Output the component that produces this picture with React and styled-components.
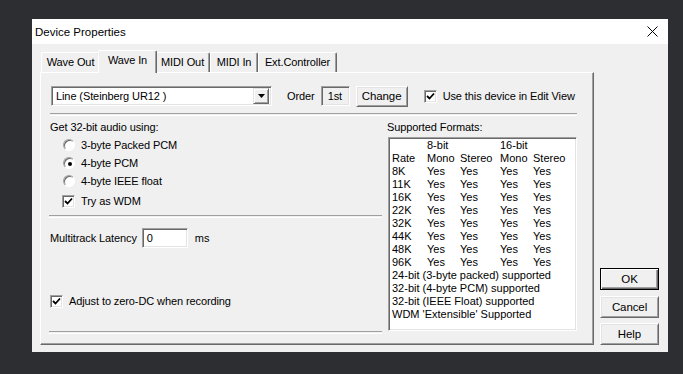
import React from 'react';
import styled, { createGlobalStyle } from 'styled-components';

const GlobalStyle = createGlobalStyle`
  html, body {
    margin: 0;
    padding: 0;
    background: #2d2e31;
  }
  body {
    font-family: "Liberation Sans", Arial, sans-serif;
    font-size: 11px;
    letter-spacing: -0.1px;
    color: #000;
  }
`;

const Desktop = styled.div`
  min-height: 374px;
  padding: 19px 0 0 32px;
  box-sizing: border-box;
  background: #2d2e31;
`;

const Window = styled.div`
  width: 636px;
  height: 333px;
  background: #f0f0f0;
  display: flex;
  flex-direction: column;
`;

const TitleBar = styled.div`
  height: 25px;
  background: #fff;
  display: flex;
  align-items: center;
  justify-content: space-between;
  padding: 0 10px 0 3px;
  font-size: 11.5px;
  letter-spacing: 0;
`;

const CloseIcon = styled.svg`
  width: 11px;
  height: 11px;
  display: block;
`;

const Body = styled.div`
  flex: 1;
  display: flex;
  padding: 6px 8px 7px 8px;
  gap: 6px;
`;

const TabArea = styled.div`
  width: 554px;
  display: flex;
  flex-direction: column;
`;

const TabStrip = styled.div`
  height: 22px;
  display: flex;
  align-items: flex-end;
  padding-left: 1px;
`;

const Tab = styled.div`
  position: relative;
  box-sizing: border-box;
  width: ${p => p.$w + (p.$active ? 4 : 0)}px;
  height: ${p => (p.$active ? '23px' : '20px')};
  margin: ${p => (p.$active ? '0 -2px -1px -2px' : '0')};
  padding-top: 3px;
  text-align: center;
  z-index: ${p => (p.$active ? 1 : 0)};
  background: #f0f0f0;
  border-top: 1px solid #fff;
  border-left: 1px solid #fff;
  border-right: 1px solid #696969;
  border-radius: 2px 2px 0 0;
  box-shadow: inset -1px 0 #a0a0a0;
  white-space: nowrap;
  line-height: 13px;
`;

const Panel = styled.div`
  flex: 1;
  box-sizing: border-box;
  border-top: 1px solid #fff;
  border-left: 1px solid #fff;
  border-right: 1px solid #696969;
  border-bottom: 1px solid #696969;
  box-shadow: inset -1px -1px #a0a0a0;
  padding: 13px 16px 0 10px;
  display: flex;
  flex-direction: column;
`;

const TopRow = styled.div`
  height: 20px;
  display: flex;
  align-items: center;
`;

const Sunken = styled.div`
  box-sizing: border-box;
  height: ${p => p.$h || 20}px;
  width: ${p => p.$w}px;
  background: ${p => (p.$readOnly ? '#f0f0f0' : '#fff')};
  border-top: 1px solid #a0a0a0;
  border-left: 1px solid #a0a0a0;
  border-right: 1px solid #fff;
  border-bottom: 1px solid #fff;
  box-shadow: inset 1px 1px #696969, inset -1px -1px #e3e3e3;
  display: flex;
  align-items: center;
  padding-left: ${p => p.$pad || 3}px;
  white-space: nowrap;
`;

const Select = styled(Sunken)`
  width: 221px;
  padding: 2px;
  justify-content: space-between;
`;

const SelectText = styled.span`
  padding-left: 2px;
`;

const ArrowButton = styled.div`
  width: 16px;
  height: 16px;
  box-sizing: border-box;
  background: #f0f0f0;
  border-top: 1px solid #e3e3e3;
  border-left: 1px solid #e3e3e3;
  border-right: 1px solid #696969;
  border-bottom: 1px solid #696969;
  box-shadow: inset 1px 1px #fff, inset -1px -1px #a0a0a0;
  display: flex;
  align-items: center;
  justify-content: center;
`;

const Label = styled.span`
  margin-left: ${p => p.$ml || 0}px;
  margin-right: ${p => p.$mr || 0}px;
  white-space: nowrap;
`;

const Button = styled.div`
  box-sizing: border-box;
  width: ${p => p.$w || 59}px;
  height: ${p => p.$h || 22}px;
  background: #f0f0f0;
  border-top: 1px solid ${p => (p.$default ? '#000' : '#fff')};
  border-left: 1px solid ${p => (p.$default ? '#000' : '#fff')};
  border-right: 1px solid ${p => (p.$default ? '#000' : '#696969')};
  border-bottom: 1px solid ${p => (p.$default ? '#000' : '#696969')};
  box-shadow: ${p =>
    p.$default
      ? 'inset 1px 1px #fff, inset -1px -1px #696969, inset -2px -2px #a0a0a0'
      : 'inset 1px 1px #e3e3e3, inset -1px -1px #a0a0a0'};
  display: flex;
  align-items: center;
  justify-content: center;
  margin-left: ${p => p.$ml || 0}px;
  margin-top: ${p => p.$mt || 0}px;
  font-size: 11.5px;
`;

const CheckRow = styled.div`
  height: 18px;
  display: flex;
  align-items: center;
  gap: 6px;
  margin-left: ${p => p.$ml || 0}px;
  margin-top: ${p => p.$mt || 0}px;
  white-space: nowrap;
`;

const CheckBox = styled.div`
  box-sizing: border-box;
  width: 13px;
  height: 13px;
  background: #fff;
  border-top: 1px solid #a0a0a0;
  border-left: 1px solid #a0a0a0;
  border-right: 1px solid #fff;
  border-bottom: 1px solid #fff;
  box-shadow: inset 1px 1px #696969, inset -1px -1px #e3e3e3;
  display: flex;
  align-items: center;
  justify-content: center;
  flex-shrink: 0;
`;

const Radio = styled.div`
  box-sizing: border-box;
  width: 12px;
  height: 12px;
  border-radius: 50%;
  background: #fff;
  border: 1px solid;
  border-color: #a0a0a0 #fff #fff #a0a0a0;
  box-shadow: inset 1px 1px #696969;
  display: flex;
  align-items: center;
  justify-content: center;
  flex-shrink: 0;
  &::after {
    content: '';
    display: ${p => (p.$on ? 'block' : 'none')};
    width: 4px;
    height: 4px;
    border-radius: 50%;
    background: #000;
    margin: 1px 0 0 1px;
  }
`;

const Separator = styled.div`
  height: 1px;
  border-top: 1px solid #a0a0a0;
  border-bottom: 1px solid #fff;
  margin-top: ${p => p.$mt || 0}px;
  margin-left: -1px;
`;

const Columns = styled.div`
  display: flex;
  gap: 5px;
`;

const LeftColumn = styled.div`
  width: 332px;
  display: flex;
  flex-direction: column;
  margin-left: -1px;
`;

const RightColumn = styled.div`
  flex: 1;
  display: flex;
  flex-direction: column;
`;

const Heading = styled.div`
  line-height: 14px;
  margin-top: 4px;
  white-space: nowrap;
`;

const RadioGroup = styled.div`
  display: flex;
  flex-direction: column;
  margin-top: 2px;
  padding-left: 13px;
`;

const FieldRow = styled.div`
  height: 20px;
  display: flex;
  align-items: center;
  margin-top: ${p => p.$mt || 0}px;
`;

const ListBox = styled.div`
  box-sizing: border-box;
  height: 194px;
  width: 189px;
  margin-top: 3px;
  margin-left: 1px;
  background: #fff;
  border-top: 1px solid #a0a0a0;
  border-left: 1px solid #a0a0a0;
  border-right: 1px solid #fff;
  border-bottom: 1px solid #fff;
  box-shadow: inset 1px 1px #696969, inset -1px -1px #e3e3e3;
  padding: 1px 0 0 3px;
  line-height: 13px;
  letter-spacing: 0;
`;

const FormatGrid = styled.div`
  display: grid;
  grid-template-columns: 35px 33px 40px 33px auto;
  white-space: nowrap;
`;

const ListLine = styled.div`
  white-space: nowrap;
`;

const ButtonColumn = styled.div`
  display: flex;
  flex-direction: column;
  justify-content: flex-end;
`;

const Tick = () => (
  <svg width="9" height="9" viewBox="0 0 9 9">
    <path d="M1 4 L3.5 6.5 L8 1.5" fill="none" stroke="#000" strokeWidth="1.8" />
  </svg>
);

const tabs = [
  { name: 'Wave Out', w: 59 },
  { name: 'Wave In', w: 55 },
  { name: 'MIDI Out', w: 55 },
  { name: 'MIDI In', w: 48 },
  { name: 'Ext.Controller', w: 79 },
];
const rates = ['8K', '11K', '16K', '22K', '32K', '44K', '48K', '96K'];
const notes = [
  '24-bit (3-byte packed) supported',
  '32-bit (4-byte PCM) supported',
  '32-bit (IEEE Float) supported',
  "WDM 'Extensible' Supported",
];

export default function App() {
  return (
    <>
      <GlobalStyle />
      <Desktop>
        <Window>
          <TitleBar>
            <span>Device Properties</span>
            <CloseIcon viewBox="0 0 11 11">
              <path d="M0.5 0.5 L10.5 10.5 M10.5 0.5 L0.5 10.5" stroke="#000" strokeWidth="1" />
            </CloseIcon>
          </TitleBar>
          <Body>
            <TabArea>
              <TabStrip>
                {tabs.map(t => (
                  <Tab key={t.name} $w={t.w} $active={t.name === 'Wave In'}>{t.name}</Tab>
                ))}
              </TabStrip>
              <Panel>
                <TopRow>
                  <Select>
                    <SelectText>Line (Steinberg UR12 )</SelectText>
                    <ArrowButton>
                      <svg width="7" height="4" viewBox="0 0 7 4">
                        <path d="M0 0 H7 L3.5 4 Z" fill="#000" />
                      </svg>
                    </ArrowButton>
                  </Select>
                  <Label $ml={15} $mr={6}>Order</Label>
                  <Sunken $w={29} $readOnly $pad={6}>1st</Sunken>
                  <Button $w={52} $h={21} $ml={6}>Change</Button>
                  <CheckRow $ml={16}>
                    <CheckBox><Tick /></CheckBox>
                    <span>Use this device in Edit View</span>
                  </CheckRow>
                </TopRow>
                <Separator $mt={7} />
                <Columns>
                  <LeftColumn>
                    <Heading>Get 32-bit audio using:</Heading>
                    <RadioGroup>
                      <CheckRow><Radio /><span>3-byte Packed PCM</span></CheckRow>
                      <CheckRow><Radio $on /><span>4-byte PCM</span></CheckRow>
                      <CheckRow><Radio /><span>4-byte IEEE float</span></CheckRow>
                    </RadioGroup>
                    <CheckRow $ml={12} $mt={2}>
                      <CheckBox><Tick /></CheckBox>
                      <span>Try as WDM</span>
                    </CheckRow>
                    <Separator $mt={5} />
                    <FieldRow $mt={10}>
                      <Label $mr={5}>Multitrack Latency</Label>
                      <Sunken $w={46} $pad={4}>0</Sunken>
                      <Label $ml={7}>ms</Label>
                    </FieldRow>
                    <CheckRow $mt={44}>
                      <CheckBox><Tick /></CheckBox>
                      <span>Adjust to zero-DC when recording</span>
                    </CheckRow>
                    <Separator $mt={21} />
                  </LeftColumn>
                  <RightColumn>
                    <Heading>Supported Formats:</Heading>
                    <ListBox>
                      <FormatGrid>
                        <span />
                        <span>8-bit</span>
                        <span />
                        <span>16-bit</span>
                        <span />
                        <span>Rate</span>
                        <span>Mono</span>
                        <span>Stereo</span>
                        <span>Mono</span>
                        <span>Stereo</span>
                        {rates.map(r => (
                          <React.Fragment key={r}>
                            <span>{r}</span>
                            <span>Yes</span>
                            <span>Yes</span>
                            <span>Yes</span>
                            <span>Yes</span>
                          </React.Fragment>
                        ))}
                      </FormatGrid>
                      {notes.map(n => (
                        <ListLine key={n}>{n}</ListLine>
                      ))}
                    </ListBox>
                  </RightColumn>
                </Columns>
              </Panel>
            </TabArea>
            <ButtonColumn>
              <Button $default>OK</Button>
              <Button $mt={6}>Cancel</Button>
              <Button $mt={5}>Help</Button>
            </ButtonColumn>
          </Body>
        </Window>
      </Desktop>
    </>
  );
}
